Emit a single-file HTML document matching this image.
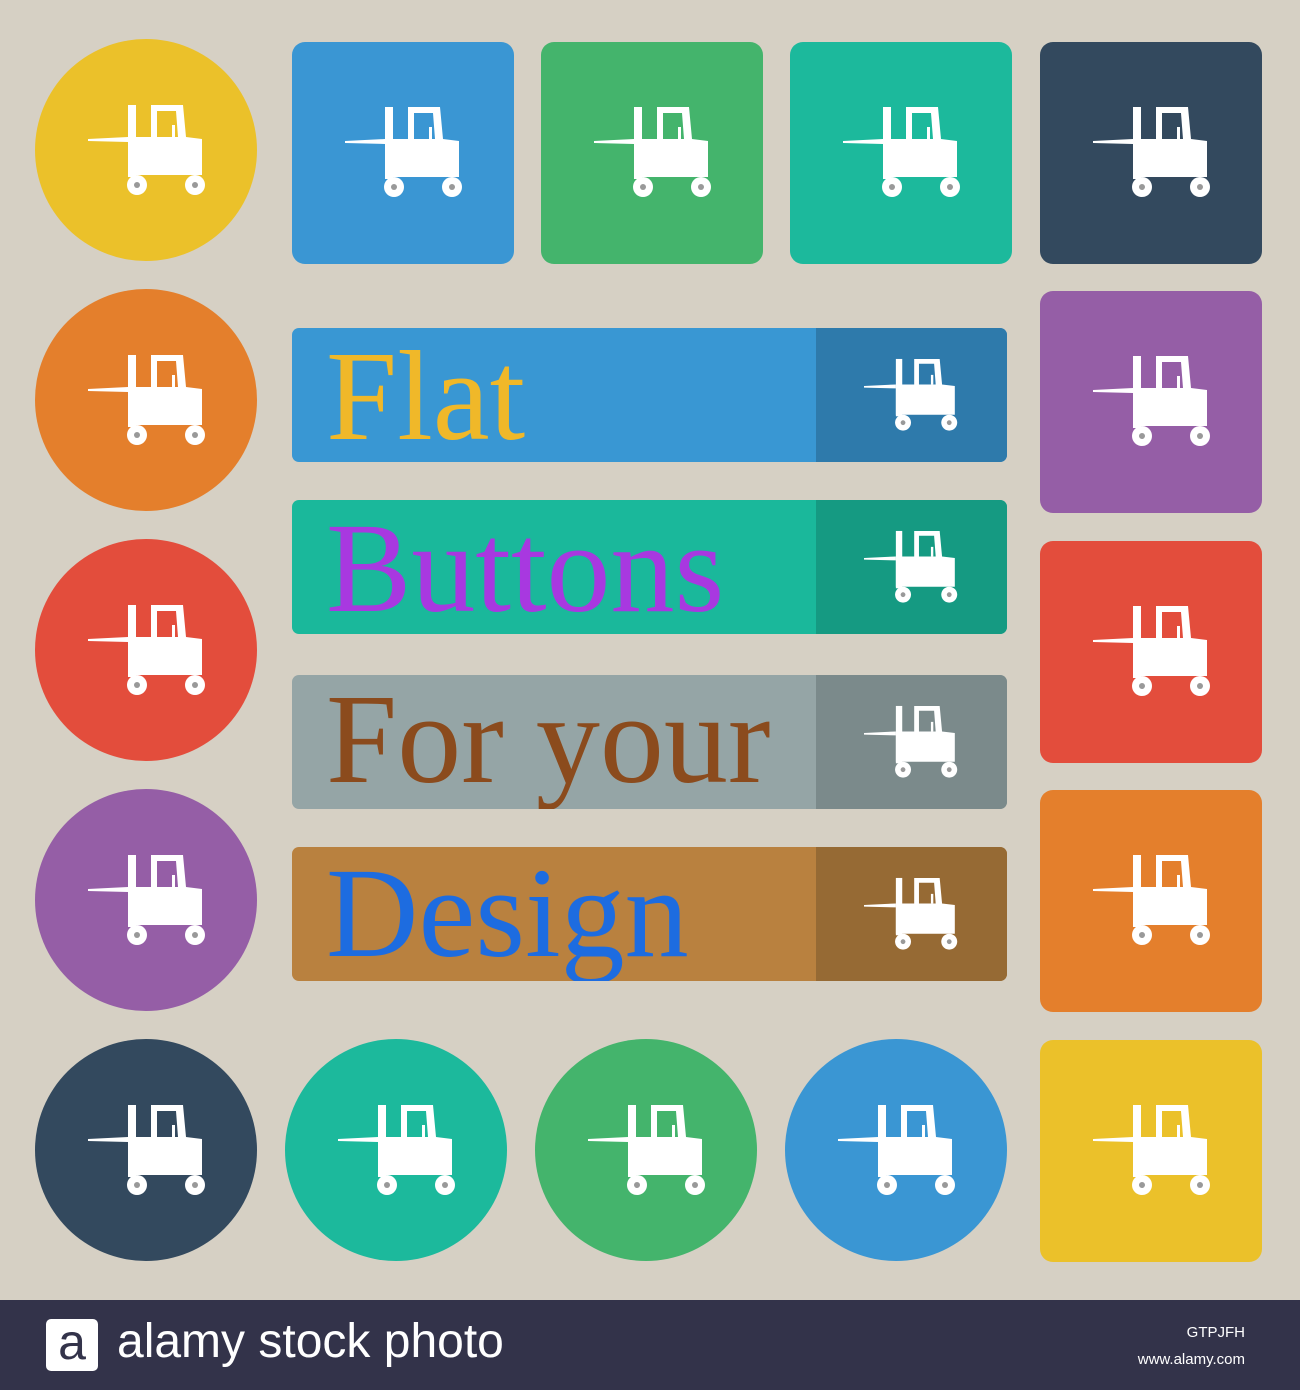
<!DOCTYPE html>
<html><head><meta charset="utf-8"><style>
body{margin:0;width:1300px;height:1390px;background:#d6d0c4;position:relative;overflow:hidden;font-family:"Liberation Sans",sans-serif}
.s{position:absolute;width:222px;height:222px;border-radius:13px}
.c{position:absolute;width:222px;height:222px;border-radius:50%}
.b{position:absolute;left:292px;width:715px;height:134px;border-radius:7px;overflow:hidden}
.b .d{position:absolute;left:524px;top:0;width:191px;height:100%}
.b .t{position:absolute;left:34px;font-family:"Liberation Serif",serif;font-size:128px;line-height:1;white-space:nowrap}
svg.i{position:absolute;width:118px;height:92px}
</style></head><body>
<svg width="0" height="0" style="position:absolute"><defs><symbol id="f" viewBox="0 0 118 92">
<path d="M0 36 L40 34 L40 39 L0 38Z" fill="#fff"/>
<rect x="40" y="2" width="8" height="72" fill="#fff"/>
<path d="M63 2 H95 L98 34 L114 36 V72 H40 V34 H63Z M69 8 V34 H90 L88 8Z" fill="#fff" fill-rule="evenodd"/>
<rect x="84" y="22" width="3" height="12" fill="#fff"/>
<circle cx="49" cy="82" r="10" fill="#fff"/><circle cx="49" cy="82" r="3" fill="#999"/>
<circle cx="107" cy="82" r="10" fill="#fff"/><circle cx="107" cy="82" r="3" fill="#999"/>
</symbol></defs></svg>

<div class="c" style="left:35px;top:39px;background:#ebc12a"></div>
<div class="c" style="left:35px;top:289px;background:#e47f2c"></div>
<div class="c" style="left:35px;top:539px;background:#e34d3c"></div>
<div class="c" style="left:35px;top:789px;background:#955ea6"></div>
<div class="c" style="left:35px;top:1039px;background:#33495e"></div>
<div class="c" style="left:285px;top:1039px;background:#1cb99c"></div>
<div class="c" style="left:535px;top:1039px;background:#44b46c"></div>
<div class="c" style="left:785px;top:1039px;background:#3a96d3"></div>

<div class="s" style="left:292px;top:42px;background:#3a96d3"></div>
<div class="s" style="left:541px;top:42px;background:#44b46c"></div>
<div class="s" style="left:790px;top:42px;background:#1cb99c"></div>
<div class="s" style="left:1040px;top:42px;background:#33495e"></div>
<div class="s" style="left:1040px;top:291px;background:#955ea6"></div>
<div class="s" style="left:1040px;top:541px;background:#e34d3c"></div>
<div class="s" style="left:1040px;top:790px;background:#e47f2c"></div>
<div class="s" style="left:1040px;top:1040px;background:#ebc12a"></div>

<div class="b" style="top:328px;background:#3997d3"><div class="d" style="background:#2e7aab"></div><div class="t" style="top:4px;color:#f0b829">Flat</div></div>
<div class="b" style="top:500px;background:#1ab89b"><div class="d" style="background:#159a82"></div><div class="t" style="top:4px;color:#a838e0">Buttons</div></div>
<div class="b" style="top:675px;background:#95a5a6"><div class="d" style="background:#7b8a8b"></div><div class="t" style="top:0px;color:#8b4b1d">For your</div></div>
<div class="b" style="top:847px;background:#b9813f"><div class="d" style="background:#966a34"></div><div class="t" style="top:2px;color:#1d6ce0">Design</div></div>

<svg class="i" style="left:88px;top:103px"><use href="#f"/></svg>
<svg class="i" style="left:88px;top:353px"><use href="#f"/></svg>
<svg class="i" style="left:88px;top:603px"><use href="#f"/></svg>
<svg class="i" style="left:88px;top:853px"><use href="#f"/></svg>
<svg class="i" style="left:88px;top:1103px"><use href="#f"/></svg>
<svg class="i" style="left:338px;top:1103px"><use href="#f"/></svg>
<svg class="i" style="left:588px;top:1103px"><use href="#f"/></svg>
<svg class="i" style="left:838px;top:1103px"><use href="#f"/></svg>
<svg class="i" style="left:345px;top:105px"><use href="#f"/></svg>
<svg class="i" style="left:594px;top:105px"><use href="#f"/></svg>
<svg class="i" style="left:843px;top:105px"><use href="#f"/></svg>
<svg class="i" style="left:1093px;top:105px"><use href="#f"/></svg>
<svg class="i" style="left:1093px;top:354px"><use href="#f"/></svg>
<svg class="i" style="left:1093px;top:604px"><use href="#f"/></svg>
<svg class="i" style="left:1093px;top:853px"><use href="#f"/></svg>
<svg class="i" style="left:1093px;top:1103px"><use href="#f"/></svg>
<svg class="i" style="left:864px;top:357px;width:94px;height:74px"><use href="#f"/></svg>
<svg class="i" style="left:864px;top:529px;width:94px;height:74px"><use href="#f"/></svg>
<svg class="i" style="left:864px;top:704px;width:94px;height:74px"><use href="#f"/></svg>
<svg class="i" style="left:864px;top:876px;width:94px;height:74px"><use href="#f"/></svg>

<div style="position:absolute;left:0;top:1300px;width:1300px;height:90px;background:#33334a"></div>
<div style="position:absolute;left:46px;top:1319px;width:52px;height:52px;background:#fff;border-radius:5px;color:#33334a;font-size:50px;line-height:46px;text-align:center">a</div>
<div style="position:absolute;left:117px;top:1314px;color:#fff;font-size:48px;line-height:56px">alamy stock photo</div>
<div style="position:absolute;left:1160px;top:1324px;width:85px;text-align:right;color:#fff;font-size:15px">GTPJFH</div>
<div style="position:absolute;left:1100px;top:1351px;width:145px;text-align:right;color:#fff;font-size:15px">www.alamy.com</div>
</body></html>
